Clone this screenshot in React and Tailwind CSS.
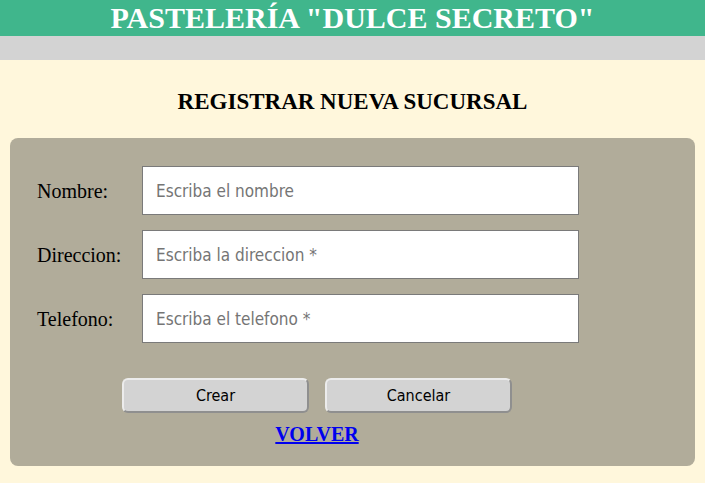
const fields = [
  { label: 'Nombre:', placeholder: 'Escriba el nombre' },
  { label: 'Direccion:', placeholder: 'Escriba la direccion *' },
  { label: 'Telefono:', placeholder: 'Escriba el telefono *' },
];

export default function App() {
  return (
    <div className="min-h-[483px] bg-[#fff7dc] font-['Liberation_Serif',serif]">
      {/* cabecera */}
      <div className="h-[36px] bg-[#40b68c] flex items-center justify-center">
        <h1 className="text-[30px] font-bold text-white leading-none">PASTELERÍA "DULCE SECRETO"</h1>
      </div>
      <div className="h-[24px] bg-[#d3d3d3]"></div>

      <h2 className="mt-[30px] text-center text-[23px] font-bold text-black leading-none">REGISTRAR NUEVA SUCURSAL</h2>

      <div className="mx-[10px] mt-[25px] h-[328px] rounded-[8px] bg-[#b1ac9a] pt-[28px] pl-[27px]">
        <div className="w-[560px] flex flex-col">
          <div className="flex flex-col gap-[15px]">
            {fields.map((f) => (
              <div key={f.label} className="flex items-center">
                <label className="w-[105px] text-[20px] text-black">{f.label}</label>
                <input
                  type="text"
                  placeholder={f.placeholder}
                  className="w-[437px] h-[49px] bg-white border border-[#7a7a7a] px-[13px] text-[17px] font-['DejaVu_Sans_Condensed','DejaVu_Sans',sans-serif] placeholder:text-[#757575] outline-none"
                />
              </div>
            ))}
          </div>

          <div className="mt-[35px] flex justify-center gap-[16px]">
            <button className="w-[187px] h-[35px] rounded-[6px] bg-[#d3d3d3] border-2 border-t-[#ececec] border-l-[#ececec] border-r-[#8f8f8f] border-b-[#8f8f8f] text-[16px] font-['DejaVu_Sans_Condensed','DejaVu_Sans',sans-serif] text-black">
              Crear
            </button>
            <button className="w-[187px] h-[35px] rounded-[6px] bg-[#d3d3d3] border-2 border-t-[#ececec] border-l-[#ececec] border-r-[#8f8f8f] border-b-[#8f8f8f] text-[16px] font-['DejaVu_Sans_Condensed','DejaVu_Sans',sans-serif] text-black">
              Cancelar
            </button>
          </div>

          <a href="#" className="mt-[11px] self-center text-[20px] font-bold text-[#0000ee] underline leading-none">
            VOLVER
          </a>
        </div>
      </div>
    </div>
  );
}
